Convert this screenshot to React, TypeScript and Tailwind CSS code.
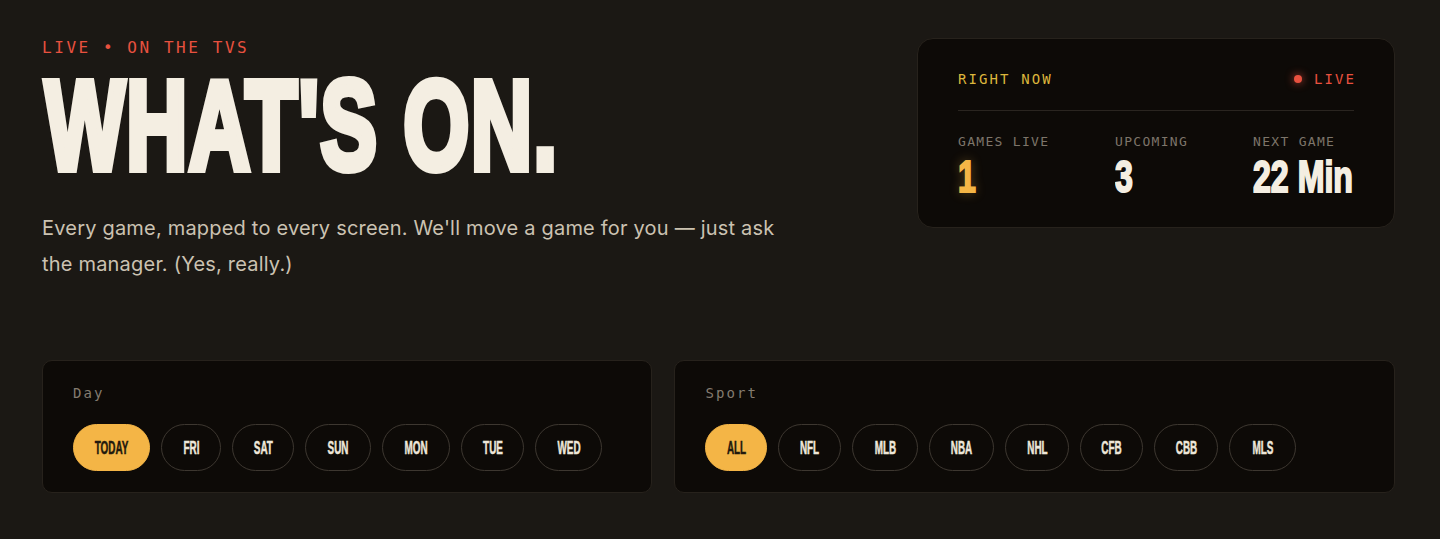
import React from 'react';

const display = "font-['Liberation_Sans_Narrow','Liberation_Sans',sans-serif]";
const mono = "font-['DejaVu_Sans_Mono','Liberation_Mono',monospace]";
const body = "font-['Inter','Noto_Sans',sans-serif]";

interface Chip {
  label: string;
  w: string;
  active?: boolean;
}

const days: Chip[] = [
  { label: 'TODAY', w: 'w-[77px]', active: true },
  { label: 'FRI', w: 'w-[60px]' },
  { label: 'SAT', w: 'w-[62px]' },
  { label: 'SUN', w: 'w-[66px]' },
  { label: 'MON', w: 'w-[68px]' },
  { label: 'TUE', w: 'w-[63px]' },
  { label: 'WED', w: 'w-[67px]' },
];

const sports: Chip[] = [
  { label: 'ALL', w: 'w-[62px]', active: true },
  { label: 'NFL', w: 'w-[63px]' },
  { label: 'MLB', w: 'w-[66px]' },
  { label: 'NBA', w: 'w-[65px]' },
  { label: 'NHL', w: 'w-[64px]' },
  { label: 'CFB', w: 'w-[63px]' },
  { label: 'CBB', w: 'w-[64px]' },
  { label: 'MLS', w: 'w-[67px]' },
];

const Pill: React.FC<Chip> = ({ label, w, active }) => (
  <button
    className={`${w} h-[47px] shrink-0 rounded-full border flex items-center justify-center ${
      active
        ? 'bg-[#f4b546] border-[#f4b546] text-[#22190d] [-webkit-text-stroke:0.5px_#22190d]'
        : 'border-[#3d3730] text-[#eee7da] [-webkit-text-stroke:0.5px_#eee7da]'
    }`}
  >
    <span className={`${display} inline-block scale-x-[0.55] text-[18px] font-bold leading-none whitespace-nowrap`}>
      {label}
    </span>
  </button>
);

const FilterPanel: React.FC<{ title: string; items: Chip[] }> = ({ title, items }) => (
  <div className="bg-[#0d0a07] border border-[#27221c] rounded-[10px] px-[30px] pt-[22px] pb-[21px]">
    <div className={`${mono} text-[14px] leading-[20px] tracking-[0.15em] text-[#847c70]`}>{title}</div>
    <div className="flex gap-[11px] mt-[21px]">
      {items.map((c) => (
        <Pill key={c.label} {...c} />
      ))}
    </div>
  </div>
);

const Stat: React.FC<{ label: string; value: string; glow?: boolean }> = ({ label, value, glow }) => (
  <div>
    <div className={`${mono} text-[13px] leading-[18px] tracking-[0.1em] text-[#7d756a] whitespace-nowrap`}>{label}</div>
    <div
      className={`${display} mt-[4px] text-[44px] font-bold leading-none block w-max whitespace-nowrap origin-left scale-x-[0.73] ${
        glow
          ? 'text-[#f4b546] [-webkit-text-stroke:2px_#f4b546] [text-shadow:0_0_14px_rgba(244,181,70,0.45)]'
          : 'text-[#f4eee2] [-webkit-text-stroke:2px_#f4eee2]'
      }`}
    >
      {value}
    </div>
  </div>
);

export default function App() {
  return (
    <div className="min-h-[539px] bg-[#1b1814] pl-[42px] pr-[45px] pt-[38px] pb-[46px] overflow-hidden">
      <div className="flex justify-between items-start">
        <div>
          <div className={`${mono} text-[16px] leading-[20px] tracking-[0.16em] text-[#e8513f]`}>LIVE • ON THE TVS</div>
          <h1
            className={`${display} mt-[5px] text-[126px] font-bold leading-none tracking-[0.02em] text-[#f4eee2] [-webkit-text-stroke:8px_#f4eee2] block w-max whitespace-nowrap origin-left scale-x-[0.67] translate-x-[3px]`}
          >
            WHAT'S ON.
          </h1>
          <p className={`${body} mt-[21px] w-[740px] text-[20px] leading-[36px] tracking-[0.01em] text-[#cbc2b2]`}>
            Every game, mapped to every screen. We'll move a game for you — just ask the manager. (Yes, really.)
          </p>
        </div>

        <div className="w-[478px] bg-[#0d0a07] border border-[#27221c] rounded-[16px] px-[40px] pt-[30px] pb-[28px]">
          <div className="flex items-center justify-between pb-[21px] border-b border-[#2a2520]">
            <span className={`${mono} text-[14px] leading-[20px] tracking-[0.15em] text-[#dcb63c]`}>RIGHT NOW</span>
            <span className="flex items-center gap-3">
              <span className="w-2 h-2 rounded-full bg-[#e8513f] shadow-[0_0_8px_rgba(232,81,63,0.85)]" />
              <span className={`${mono} text-[14px] leading-[20px] tracking-[0.15em] text-[#e8513f] -mr-[2px]`}>LIVE</span>
            </span>
          </div>
          <div className="grid grid-cols-[157px_138px_1fr] mt-[22px]">
            <Stat label="GAMES LIVE" value="1" glow />
            <Stat label="UPCOMING" value="3" />
            <Stat label="NEXT GAME" value="22 Min" />
          </div>
        </div>
      </div>

      <div className="grid grid-cols-[610fr_720fr] gap-[22px] mt-[78px]">
        <FilterPanel title="Day" items={days} />
        <FilterPanel title="Sport" items={sports} />
      </div>
    </div>
  );
}
